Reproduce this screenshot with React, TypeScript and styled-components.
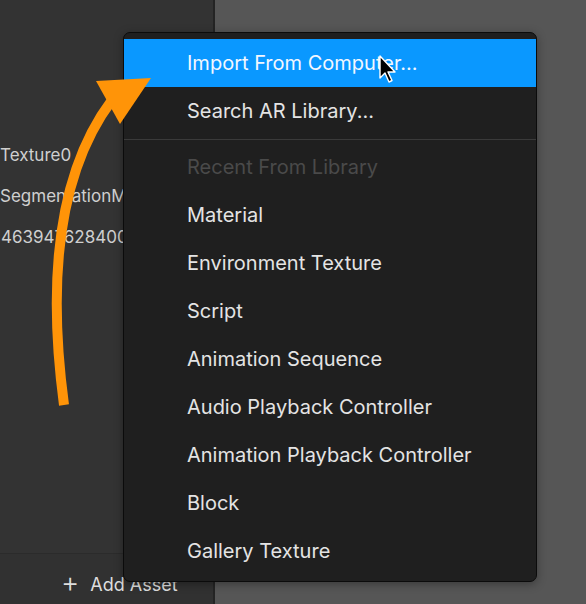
import React from "react";
import styled, { createGlobalStyle } from "styled-components";

const Global = createGlobalStyle`
  html, body { margin: 0; padding: 0; background: #555555; }
  body { font-family: Inter, "Noto Sans", sans-serif; -webkit-font-smoothing: antialiased; }
  * { box-sizing: border-box; }
  #root { width: 586px; height: 604px; }
`;

const Stage = styled.div`
  position: relative;
  width: 586px;
  height: 604px;
  display: flex;
  overflow: hidden;
`;

const LeftPanel = styled.div`
  width: 215px;
  flex: none;
  display: flex;
  flex-direction: column;
  background: #333333;
  border-right: 2px solid #242424;
`;

const AssetList = styled.div`
  flex: 1;
  padding-top: 144px;
  display: flex;
  flex-direction: column;
  gap: 19px;
  overflow: hidden;
`;

const AssetName = styled.div<{ $shift: number }>`
  font-size: 17px;
  line-height: 22px;
  color: #cfcfcf;
  white-space: nowrap;
  margin-left: ${(p) => p.$shift}px;
`;

const Footer = styled.div`
  height: 51px;
  border-top: 1px solid #2b2b2b;
  background: #313131;
  display: flex;
  align-items: center;
  gap: 11px;
  padding: 10px 0 0 61px;
  color: #dedede;
  font-size: 18px;
`;

const Plus = styled.span`
  font-size: 28px;
  font-weight: 300;
  line-height: 1;
  margin-top: -4px;
`;

const RightArea = styled.div`
  flex: 1;
  background: #565656;
`;

const Menu = styled.div`
  position: absolute;
  left: 123px;
  top: 32px;
  width: 414px;
  padding: 6px 0;
  background: #1f1f1f;
  border: 1px solid #0b0b0b;
  border-radius: 7px;
  box-shadow: 0 2px 10px rgba(0, 0, 0, 0.35);
`;

const Item = styled.div<{ $active?: boolean; $disabled?: boolean }>`
  height: 48px;
  display: flex;
  align-items: center;
  padding-left: 63px;
  font-size: 20px;
  color: ${(p) => (p.$disabled ? "#4a4a4a" : p.$active ? "#f2f7ff" : "#e4e4e4")};
  background: ${(p) => (p.$active ? "#0a98ff" : "transparent")};
  white-space: nowrap;
`;

const Separator = styled.div`
  height: 1px;
  margin: 4px 0 3px;
  background: #3a3a3a;
`;

const Overlay = styled.svg`
  position: absolute;
  left: 0;
  top: 0;
  pointer-events: none;
`;

const items = [
  "Material",
  "Environment Texture",
  "Script",
  "Animation Sequence",
  "Audio Playback Controller",
  "Animation Playback Controller",
  "Block",
  "Gallery Texture",
];

export default function App() {
  return (
    <>
      <Global />
      <Stage>
        <LeftPanel>
          <AssetList>
            <AssetName $shift={0}>Texture0</AssetName>
            <AssetName $shift={0}>SegmentationMask</AssetName>
            <AssetName $shift={-6}>1463947628400</AssetName>
          </AssetList>
          <Footer>
            <Plus>+</Plus>
            <span>Add Asset</span>
          </Footer>
        </LeftPanel>
        <RightArea />
        <Menu>
          <Item $active>Import From Computer...</Item>
          <Item>Search AR Library...</Item>
          <Separator />
          <Item $disabled>Recent From Library</Item>
          {items.map((t) => (
            <Item key={t}>{t}</Item>
          ))}
        </Menu>
        <Overlay width="586" height="604" viewBox="0 0 586 604">
          <path
            d="M64 405 C 50 300 52 180 112 100"
            fill="none"
            stroke="#ff9408"
            strokeWidth="10"
          />
          <polygon points="96,81 151,78 120,124" fill="#ff9408" />
          <path
            d="M380 56 L380 78 L385 73 L389 82 L392 80.5 L388 72 L395 72 Z"
            fill="#000"
            stroke="#fff"
            strokeWidth="1.4"
            strokeLinejoin="round"
          />
        </Overlay>
      </Stage>
    </>
  );
}
